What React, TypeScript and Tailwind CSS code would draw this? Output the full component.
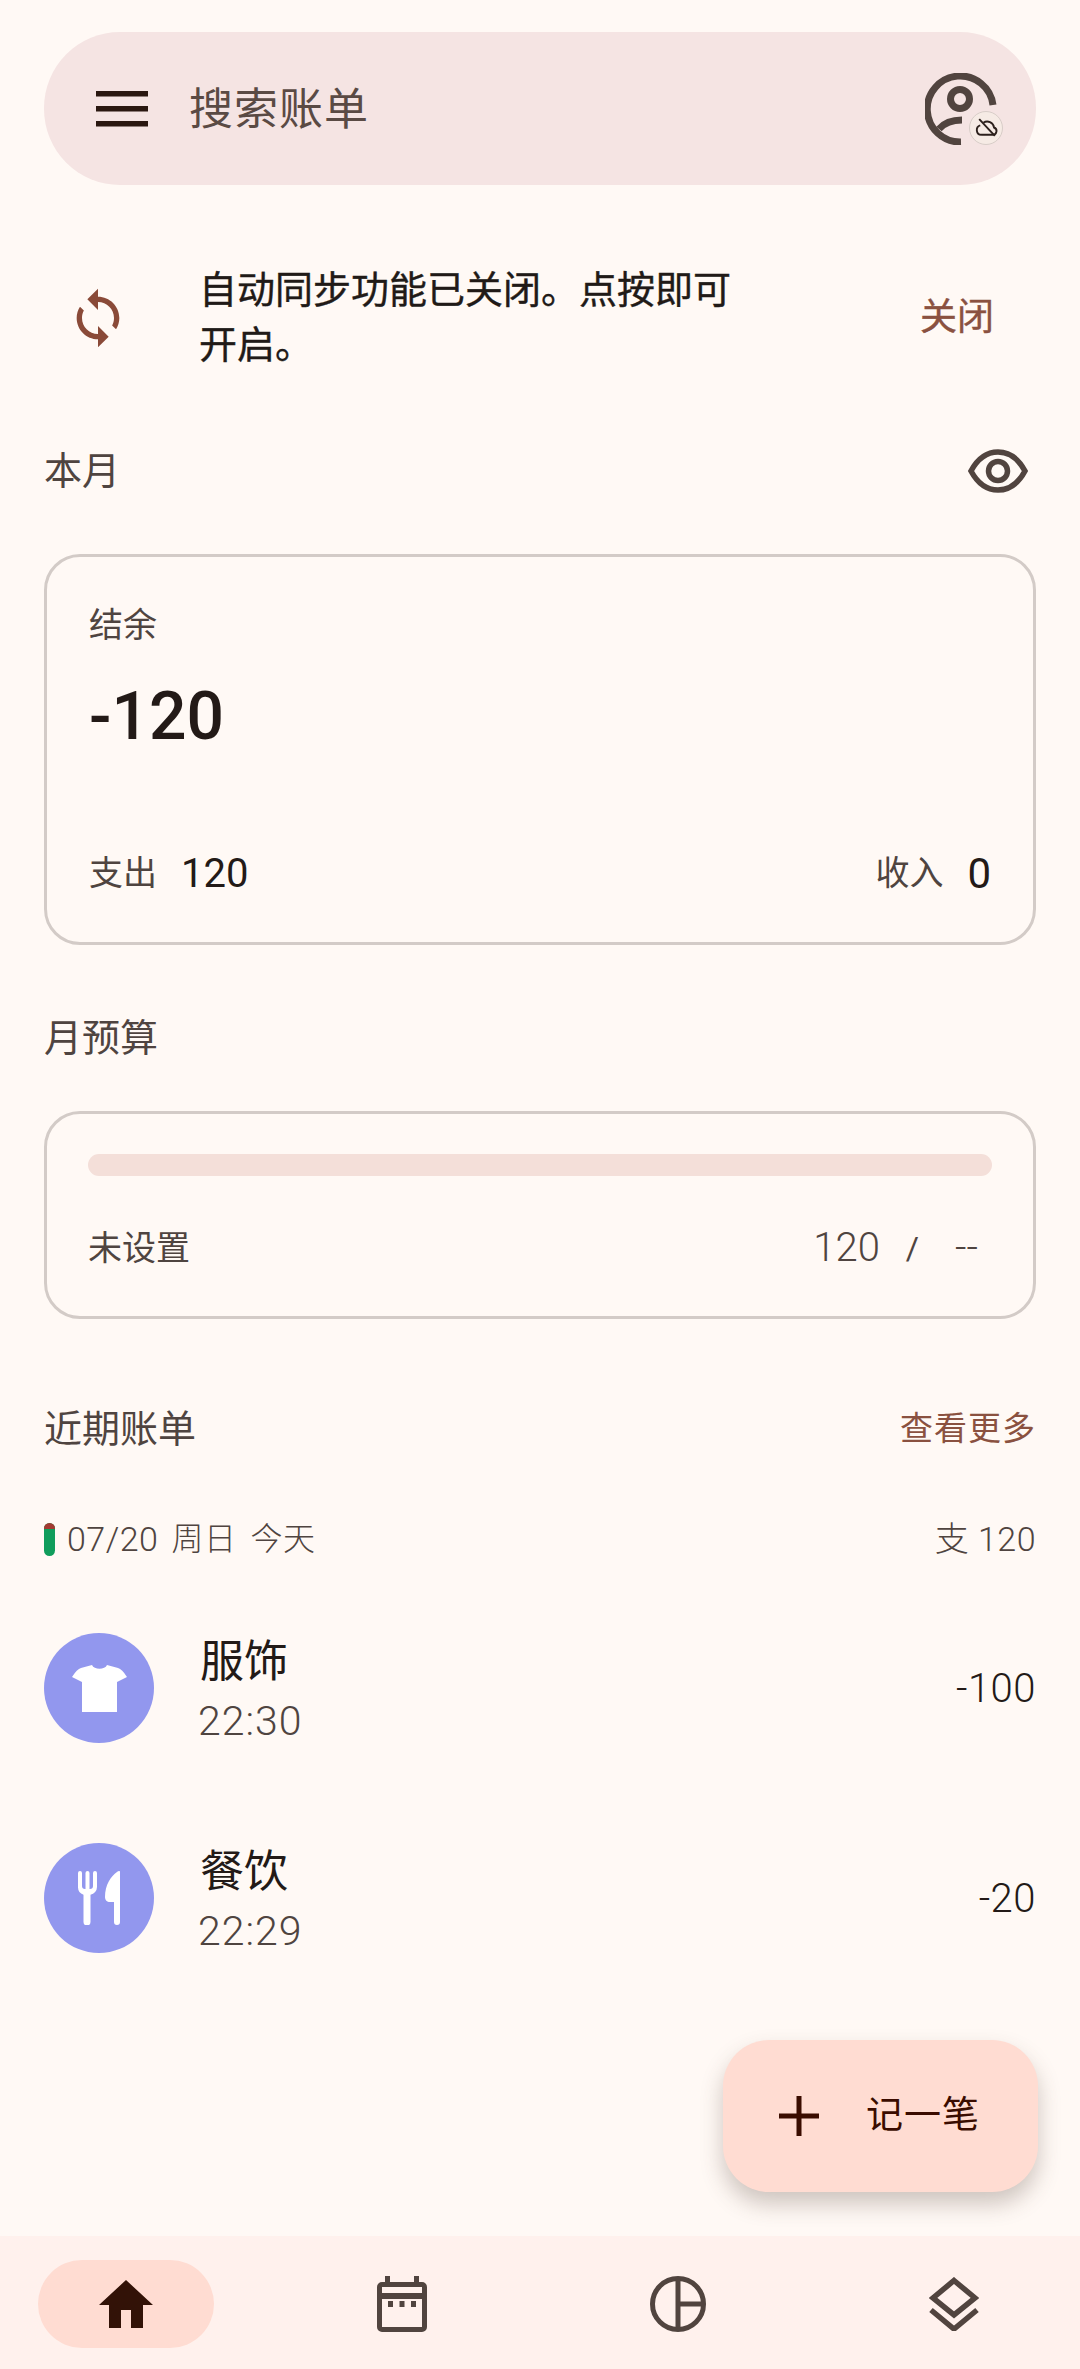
const font = "[font-family:Roboto,'Noto_Sans_CJK_SC',sans-serif]";

function SectionTitle({ children }: { children: React.ReactNode }) {
  return <span className="text-[38px] leading-[50px] text-[#4f4440]">{children}</span>;
}

function UserIcon() {
  return (
    <div className="relative w-[72px] h-[72px]">
      <svg viewBox="0 0 72 72" className="w-[72px] h-[72px]" fill="none" stroke="#51443f">
        <path d="M68 32A33 33 0 1 0 36 69" strokeWidth="7" />
        <circle cx="35" cy="26" r="9.500" strokeWidth="7" />
        <path d="M14 56C20 49 30 47 37 47" strokeWidth="7" />
      </svg>
      <div className="absolute left-[44px] top-[38px] w-[34px] h-[34px] rounded-full bg-[#f6ebe5] border border-[#d8cdc8] flex items-center justify-center">
        <svg viewBox="0 0 24 24" className="w-[25px] h-[25px]" fill="none" stroke="#2c201c" strokeWidth="1.800">
          <path d="M7 19h11a3.600 3.600 0 0 0 1.200-7A6.500 6.500 0 0 0 9 7.500M6 10a4.600 4.600 0 0 0 1 9" />
          <path d="M5 4l15 16" />
        </svg>
      </div>
    </div>
  );
}

function SyncIcon() {
  return (
    <svg viewBox="0 0 24 24" className="w-[64px] h-[64px]" fill="#8a4a38">
      <path d="M12 4V1L8 5l4 4V6c3.310 0 6 2.690 6 6 0 1.010-.25 1.970-.7 2.800l1.460 1.460C19.540 15.030 20 13.570 20 12c0-4.420-3.580-8-8-8zm0 14c-3.310 0-6-2.690-6-6 0-1.010.25-1.970.7-2.800L5.240 7.740C4.460 8.970 4 10.430 4 12c0 4.420 3.580 8 8 8v3l4-4-4-4v3z" />
    </svg>
  );
}

function Row({ icon, name, time, amount }: { icon: React.ReactNode; name: string; time: string; amount: string }) {
  return (
    <div className="h-[110px] flex items-center">
      <div className="w-[110px] h-[110px] rounded-full bg-[#9297ee] flex items-center justify-center">{icon}</div>
      <div className="ml-[44px] mt-[3px] flex flex-col gap-[6px]">
        <span className="pl-[2px] text-[44px] leading-[56px] text-[#231a17]">{name}</span>
        <span className="text-[41px] leading-[50px] font-light text-[#4f4440] tracking-[1px]">{time}</span>
      </div>
      <span className="ml-auto mt-[2px] text-[40px] font-light tracking-[0.5px] text-[#231a17]">{amount}</span>
    </div>
  );
}

export default function App() {
  return (
    <div className={`relative w-[1080px] h-[2369px] bg-[#fff9f5] flex flex-col overflow-hidden ${font}`}>
      <div className="mx-[44px] mt-[32px] h-[153px] rounded-[76px] bg-[#f5e4e3] flex items-center pl-[52px] pr-[39px]">
        <svg viewBox="0 0 52 36" className="w-[52px] h-[36px]" fill="#2a1710">
          <rect width="52" height="5.500" y="0" />
          <rect width="52" height="5.500" y="15" />
          <rect width="52" height="5.500" y="30" />
        </svg>
        <span className="ml-[41px] mt-[2px] text-[44px] tracking-[1px] text-[#5a4a44]">搜索账单</span>
        <div className="ml-auto">
          <UserIcon />
        </div>
      </div>

      <div className="mt-[78px] h-[110px] flex items-center pl-[66px] pr-[36px]">
        <SyncIcon />
        <p className="ml-[69px] w-[560px] text-[38px] leading-[55px] text-[#211a17] [-webkit-text-stroke:0.4px_#211a17]">自动同步功能已关闭。点按即可开启。</p>
        <span className="ml-auto mr-[50px] text-[37px] text-[#8a5140] [-webkit-text-stroke:0.4px_#8a5140]">关闭</span>
      </div>

      <div className="mx-[44px] mt-[68px] h-[60px] flex items-center justify-between">
        <SectionTitle>本月</SectionTitle>
        <svg viewBox="0 0 60 44" className="w-[60px] h-[44px] mr-[8px]" fill="none" stroke="#51443f" strokeWidth="5.500">
          <path d="M3 22C10 9 19 3 30 3s20 6 27 19c-7 13-16 19-27 19S10 35 3 22z" />
          <circle cx="30" cy="22" r="9.500" />
        </svg>
      </div>

      <div className="mx-[44px] mt-[53px] h-[391px] rounded-[36px] border-[3px] border-[#d3cbc7] px-[42px] pt-[46px] pb-[37px] flex flex-col">
        <span className="text-[34px] leading-[44px] text-[#4f4440]">结余</span>
        <span className="mt-[28px] text-[66px] leading-[84px] font-medium text-[#231a17]">-120</span>
        <div className="mt-auto flex items-center text-[#231a17]">
          <span className="text-[34px] text-[#4f4440]">支出</span>
          <span className="ml-[24px] text-[40px]">120</span>
          <span className="ml-auto text-[34px] text-[#4f4440]">收入</span>
          <span className="ml-[24px] text-[42px]">0</span>
        </div>
      </div>

      <div className="mx-[44px] mt-[68px]">
        <SectionTitle>月预算</SectionTitle>
      </div>

      <div className="mx-[44px] mt-[48px] h-[208px] rounded-[36px] border-[3px] border-[#d3cbc7] px-[41px] pt-[40px] flex flex-col">
        <div className="h-[22px] rounded-full bg-[#f4dfd9]" />
        <div className="mt-[42px] flex items-center text-[#4f4440]">
          <span className="text-[34px] leading-[50px]">未设置</span>
          <span className="ml-auto text-[40px] font-light">120</span>
          <span className="ml-[26px] text-[32px]">/</span>
          <span className="ml-[36px] mr-[14px] text-[40px] font-light">--</span>
        </div>
      </div>

      <div className="mx-[44px] mt-[85px] flex items-center justify-between">
        <SectionTitle>近期账单</SectionTitle>
        <span className="text-[33px] tracking-[1px] text-[#8a5140]">查看更多</span>
      </div>

      <div className="mx-[44px] mt-[55px] h-[60px] flex items-center text-[#4f4440]">
        <div className="w-[11px] h-[33px] rounded-full overflow-hidden flex flex-col bg-[#109d5c]">
          <div className="h-[6px] bg-[#a33a32]" />
        </div>
        <span className="ml-[12px] text-[34px] font-light tracking-[0.5px]">07/20</span>
        <span className="ml-[13px] text-[32px] font-light tracking-[0.5px]">周日</span>
        <span className="ml-[14px] text-[32px] font-light tracking-[0.5px]">今天</span>
        <span className="ml-auto text-[34px] font-light tracking-[0.5px]">支 120</span>
      </div>

      <div className="mx-[44px] mt-[64px] flex flex-col gap-[100px]">
        <Row
          name="服饰"
          time="22:30"
          amount="-100"
          icon={
            <svg viewBox="0 0 55 49" className="w-[55px] h-[49px]" fill="#fff">
              <path d="M20 1c2 5 13 5 15 0l11 3q4 1 9 9l-10 5v30H10V18L0 13q5-8 9-9z" />
            </svg>
          }
        />
        <Row
          name="餐饮"
          time="22:29"
          amount="-20"
          icon={
            <svg viewBox="0 0 42 54" className="w-[42px] h-[54px]" fill="#fff">
              <path d="M0 2a2 2 0 0 1 4 0v13a3 3 0 0 0 3 3h.5V2a2 2 0 0 1 4 0v16h.5a3 3 0 0 0 3-3V2a2 2 0 0 1 4 0v14a8 8 0 0 1-6.500 7.800V51a3 3 0 0 1-7 0V23.800A8 8 0 0 1 0 16z" />
              <path d="M42 1v50a3 3 0 0 1-6 0V31h-4c-3 0-5-2-5-5 0-12 6-21 12-25 1-.8 3-1.500 3 0z" />
            </svg>
          }
        />
      </div>

      <div className="absolute left-[723px] top-[2040px] w-[315px] h-[152px] rounded-[46px] bg-[#ffdcd2] shadow-[0_12px_22px_rgba(80,60,50,0.28)] flex items-center pl-[56px]">
        <svg viewBox="0 0 40 40" className="w-[40px] h-[40px]" fill="#3a0c00">
          <rect x="17.500" width="5" height="40" />
          <rect y="17.500" width="40" height="5" />
        </svg>
        <span className="ml-[47px] text-[37px] tracking-[1px] text-[#3a0c00]">记一笔</span>
      </div>

      <div className="mt-auto h-[133px] bg-[#fff1ed] flex items-start relative">
        <div className="absolute left-[38px] top-[24px] w-[176px] h-[88px] rounded-full bg-[#ffdcd2] flex items-center justify-center">
          <svg viewBox="0 0 54 48" className="w-[54px] h-[48px]" fill="#321207">
            <path d="M27 0l27 25h-10v23H32V30H22v18H10V25H0z" />
          </svg>
        </div>
        <div className="absolute left-[377px] top-[40px]">
          <svg viewBox="0 0 50 56" className="w-[50px] h-[56px]" fill="#51443f">
            <path fillRule="evenodd" d="M8 0h5v6h24V0h5v6h3a5 5 0 0 1 5 5v40a5 5 0 0 1-5 5H5a5 5 0 0 1-5-5V11a5 5 0 0 1 5-5h3zM5 11v6h40v-6zM5 23v28h40V23z" />
            <rect x="11" y="25" width="5" height="6" />
            <rect x="22.500" y="25" width="5" height="6" />
            <rect x="34" y="25" width="5" height="6" />
          </svg>
        </div>
        <div className="absolute left-[650px] top-[40px]">
          <svg viewBox="0 0 56 56" className="w-[56px] h-[56px]" fill="none" stroke="#51443f" strokeWidth="5">
            <circle cx="28" cy="28" r="25.500" />
            <path d="M28 2v52M28 28h26" />
          </svg>
        </div>
        <div className="absolute left-[929px] top-[41px]">
          <svg viewBox="0 0 50 54" className="w-[50px] h-[54px]" fill="none" stroke="#51443f" strokeWidth="5.500">
            <path d="M25 3.500L46 21 25 38 4 21z" />
            <path d="M2 33l23 19 23-19" />
          </svg>
        </div>
      </div>
    </div>
  );
}
